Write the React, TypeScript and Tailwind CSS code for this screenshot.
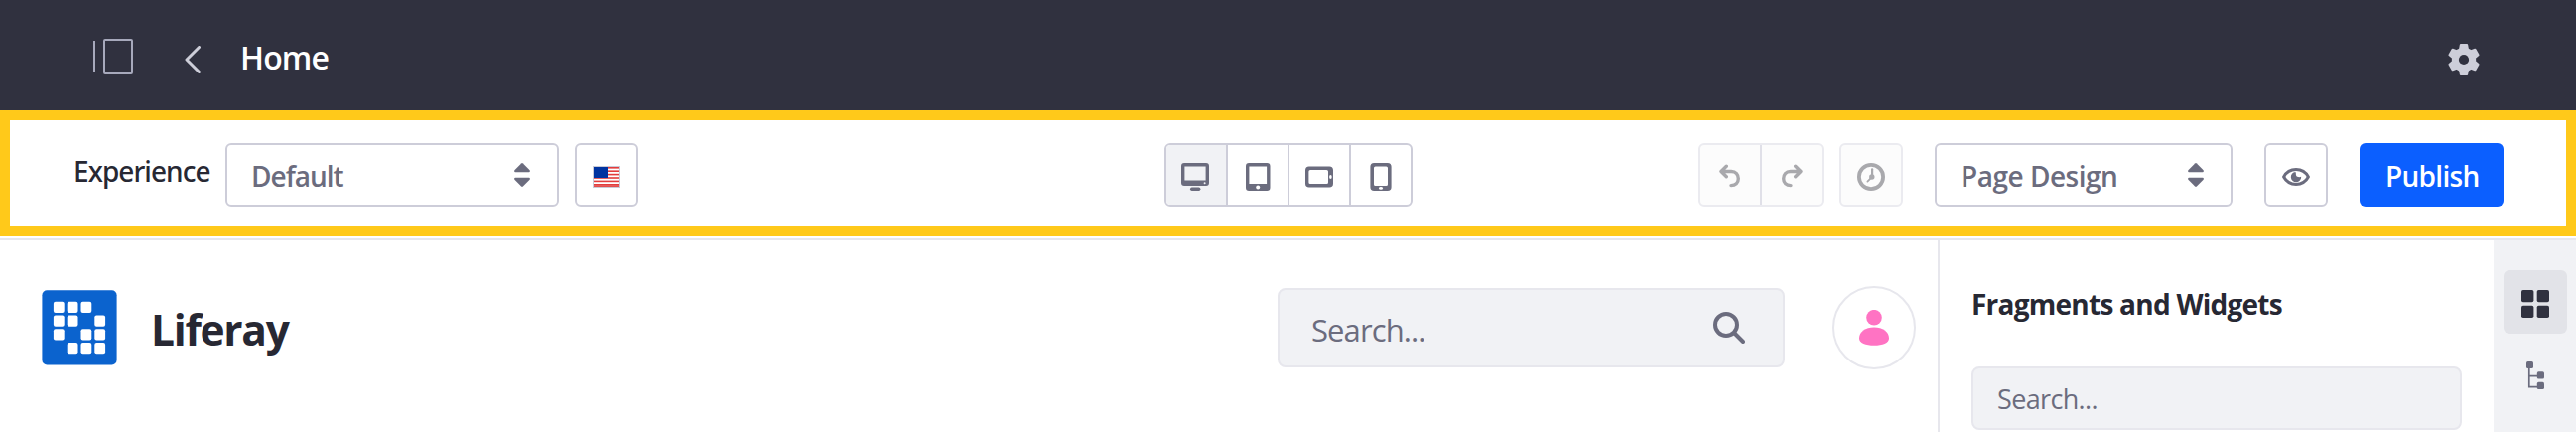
import type { ReactNode } from "react";

function PanelIcon() {
  return (
    <svg width="40" height="36" viewBox="0 0 40 36" fill="none" stroke="#a7a9bc" strokeWidth="2">
      <path d="M1 2V34" />
      <rect x="11" y="1" width="28" height="34" rx="1" />
    </svg>
  );
}

function BackIcon() {
  return (
    <svg width="16" height="28" viewBox="0 0 16 28" fill="none" stroke="#cdced9" strokeWidth="3" strokeLinecap="round" strokeLinejoin="round">
      <path d="M14.5 1.5L2 14L14.5 26.5" />
    </svg>
  );
}

function GearIcon() {
  return (
    <svg width="32" height="32" viewBox="-16 -16 32 32" fill="#cdced9">
      <circle r="12.2" />
      {[0, 60, 120, 180, 240, 300].map((a) => (
        <path key={a} transform={`rotate(${a})`} d="M-3.1 -14.9H3.1L3.9 -10H-3.9Z" stroke="#cdced9" strokeWidth="2.2" strokeLinejoin="round" />
      ))}
      <circle r="5.1" fill="#30313f" />
    </svg>
  );
}

function CaretDouble() {
  return (
    <svg width="16" height="24" viewBox="0 0 16 24" fill="#6b6c7e">
      <path d="M7.1 0.5Q8 -0.4 8.9 0.5L15.6 7.3Q16.4 9 14.8 9.2H1.2Q-0.4 9 0.4 7.3Z" />
      <path d="M7.1 23.5Q8 24.4 8.9 23.5L15.6 16.7Q16.4 15 14.8 14.8H1.2Q-0.4 15 0.4 16.7Z" />
    </svg>
  );
}

function FlagIcon() {
  return (
    <svg width="28" height="22" viewBox="0 0 28 22">
      <rect width="28" height="22" fill="#c9cad6" />
      <rect x="1" y="1" width="26" height="20" fill="#fff" />
      {[1, 4.4, 7.8, 11.2, 14.6, 18].map((y) => (
        <rect key={y} x="1" y={y} width="26" height="1.6" fill="#e23c3c" />
      ))}
      <rect x="1" y="19.4" width="26" height="1.5" fill="#e23c3c" />
      <rect x="1" y="1" width="14" height="11" fill="#0033a0" />
    </svg>
  );
}

function DesktopIcon() {
  return (
    <svg width="28" height="28" viewBox="0 0 28 28" fill="#6b6c7e">
      <path fillRule="evenodd" d="M3 0H25Q28 0 28 3V20Q28 23 25 23H3Q0 23 0 20V3Q0 0 3 0ZM3.4 3.6V17.6H24.6V3.6Z" />
      <rect x="9" y="24.6" width="10.4" height="3.4" rx="1.7" />
      <circle cx="23.6" cy="20.2" r="1" fill="#f1f2f5" />
    </svg>
  );
}

function TabletIcon() {
  return (
    <svg width="25" height="28" viewBox="0 0 25 28" fill="#6b6c7e">
      <path fillRule="evenodd" d="M3.2 0H21.3Q24.5 0 24.5 3.2V24.8Q24.5 28 21.3 28H3.2Q0 28 0 24.8V3.2Q0 0 3.2 0ZM3.4 3.5V21H21.1V3.5Z" />
      <circle cx="12.2" cy="24.5" r="2" fill="#fff" />
    </svg>
  );
}

function PhoneIcon({ landscape = false }: { landscape?: boolean }) {
  return (
    <svg width="28" height="28" viewBox="0 0 28 28" fill="#6b6c7e" className={landscape ? "-rotate-90" : ""}>
      <path fillRule="evenodd" d="M7.2 0H20.8Q24.6 0 24.6 3.8V24.2Q24.6 28 20.8 28H7.2Q3.4 28 3.4 24.2V3.8Q3.4 0 7.2 0ZM8.6 3.4Q7 3.4 7 5V21.4Q7 23 8.6 23H19.4Q21 23 21 21.4V5Q21 3.4 19.4 3.4Z" />
      <ellipse cx="14" cy="25.4" rx="2" ry="1.3" fill="#fff" />
    </svg>
  );
}

function UndoIcon({ flip = false }: { flip?: boolean }) {
  return (
    <svg width="22" height="24" viewBox="0 0 22 24" fill="none" stroke="#a9a9ad" strokeWidth="3.4" strokeLinecap="round" strokeLinejoin="round" className={flip ? "-scale-x-100" : ""}>
      <path d="M7.3 2.2L2 7.5L7.3 12.8M2.4 7.5H12.2C16.8 7.5 19.3 10.8 19.3 14.8C19.3 18.8 16.4 21.6 12 21.6" />
    </svg>
  );
}

function TimeIcon() {
  return (
    <svg width="28" height="28" viewBox="0 0 28 28" fill="none" stroke="#a9a9ad">
      <circle cx="14" cy="14" r="12.1" strokeWidth="3.8" />
      <path d="M15.1 14V6.3" strokeWidth="2.2" strokeLinecap="round" />
      <path d="M14.6 14.4L10.4 18.6" strokeWidth="1.8" strokeLinecap="round" />
      <circle cx="14.8" cy="14" r="2.7" fill="#a9a9ad" stroke="none" />
    </svg>
  );
}

function EyeIcon() {
  return (
    <svg width="28" height="18" viewBox="0 0 28 18">
      <path d="M1.6 9C4 4.6 8.6 1.6 14 1.6S24 4.6 26.4 9C24 13.4 19.4 16.4 14 16.4S4 13.4 1.6 9Z" fill="none" stroke="#6b6c7e" strokeWidth="3" strokeLinejoin="round" />
      <path d="M13.4 3.9A5.2 5.2 0 1 0 19.2 8.8C17.6 9.6 14.4 9.2 14 7.2C13.8 6 14 4.8 13.4 3.9Z" fill="#6b6c7e" />
    </svg>
  );
}

const logoCells = [
  [0, 0], [1, 0], [2, 0],
  [0, 1], [1, 1], [3, 1],
  [0, 2], [2, 2], [3, 2],
  [1, 3], [2, 3], [3, 3],
];

function Logo() {
  return (
    <svg width="76" height="76" viewBox="0 0 76 76">
      <rect x="0.4" y="0.3" width="75.2" height="75.2" rx="5" fill="#0b63ce" />
      {logoCells.map(([c, r]) => (
        <rect key={`${c}-${r}`} x={11.9 + c * 13.8} y={11.7 + r * 13.8} width="10.8" height="11.2" rx="2" fill="#fff" />
      ))}
    </svg>
  );
}

function SearchIcon() {
  return (
    <svg width="32" height="32" viewBox="0 0 32 32" fill="none" stroke="#6b6c7e" strokeLinecap="round">
      <circle cx="13" cy="13" r="11" strokeWidth="4" />
      <path d="M21.5 21.5L30 30" strokeWidth="4" />
    </svg>
  );
}

function PersonIcon() {
  return (
    <svg width="30" height="36" viewBox="0 0 30 36" fill="#ff73c3">
      <circle cx="15" cy="7.7" r="7.8" />
      <path d="M0 28.5C0 22 6.4 17.4 15 17.4S30 22 30 28.5C30 33.4 23.5 35.8 15 35.8S0 33.4 0 28.5Z" />
    </svg>
  );
}

function CardsIcon() {
  return (
    <svg width="28" height="28" viewBox="0 0 28 28" fill="#30313f">
      <rect width="12.4" height="12.2" rx="1.8" />
      <rect x="15.7" width="12.3" height="12.2" rx="1.8" />
      <rect y="15.8" width="12.4" height="12.2" rx="1.8" />
      <rect x="15.7" y="15.8" width="12.3" height="12.2" rx="1.8" />
    </svg>
  );
}

function TreeIcon() {
  return (
    <svg width="18" height="28" viewBox="0 0 18 28" fill="#6b6c7e">
      <rect width="7" height="7" rx="1.6" />
      <rect x="10.8" y="10.3" width="7.2" height="7.2" rx="1.6" />
      <rect x="10.8" y="20.8" width="7.2" height="7.2" rx="1.6" />
      <path d="M2.8 5V25.6H12M2.8 14.7H12" fill="none" stroke="#6b6c7e" strokeWidth="1.7" />
    </svg>
  );
}

function IconButton({ children, disabled = false }: { children: ReactNode; disabled?: boolean }) {
  return (
    <button
      className={`flex size-16 items-center justify-center rounded-md border-2 pt-1 ${
        disabled ? "border-[#ebebf0] bg-[#fcfcfc]" : "border-[#cdcdd9] bg-white"
      }`}
    >
      {children}
    </button>
  );
}

function Select({ label, className }: { label: string; className: string }) {
  return (
    <button className={`flex h-16 items-center justify-between rounded-md border-2 border-[#cdcdd9] pl-6 text-[28px] leading-10 font-semibold text-[#6b6c7e] ${className}`}>
      <span className="mt-0.5">{label}</span>
      <CaretDouble />
    </button>
  );
}

export default function App() {
  return (
    <div className="flex h-[435px] w-[2595px] flex-col overflow-hidden bg-white font-['Open_Sans','Noto_Sans',sans-serif] whitespace-nowrap">
      <header className="flex h-[111px] shrink-0 items-center bg-[#30313f] pt-[3px] pr-[97px] pl-[94px]">
        <PanelIcon />
        <span className="mt-[6px] ml-[52px]">
          <BackIcon />
        </span>
        <h1 className="mt-0.5 ml-10 text-[32px] leading-10 font-semibold tracking-[-0.9px] text-white">Home</h1>
        <span className="mt-[6px] ml-auto">
          <GearIcon />
        </span>
      </header>

      <div className="flex h-[127px] shrink-0 items-center border-[10px] border-[#ffc91a] pt-[3px] pr-[63px] pl-16">
        <div className="flex w-[1099px] items-center">
          <label className="-mt-2 w-[153px] font-['Noto_Sans',sans-serif] text-[28px] leading-10 font-medium tracking-[-0.95px] text-[#272833]">Experience</label>
          <Select label="Default" className="w-[336px] pr-[27px] tracking-[-1px]" />
          <div className="ml-4">
            <IconButton>
              <FlagIcon />
            </IconButton>
          </div>
        </div>

        <div className="flex h-16 w-[250px] divide-x-2 divide-[#cdcdd9] overflow-hidden rounded-md border-2 border-[#cdcdd9]">
          <button className="flex w-[62px] items-center justify-center bg-[#f1f2f5] pt-1 pr-0.5">
            <DesktopIcon />
          </button>
          <button className="flex w-[62px] items-center justify-center pt-1">
            <TabletIcon />
          </button>
          <button className="flex w-[62px] items-center justify-center pt-1">
            <PhoneIcon landscape />
          </button>
          <button className="flex w-[60px] items-center justify-center pt-1">
            <PhoneIcon />
          </button>
        </div>

        <div className="ml-auto flex items-center">
          <div className="flex h-16 w-[126px] rounded-md border-2 border-[#ebebf0] bg-[#fcfcfc]">
            <button className="flex w-[62px] items-center justify-center border-r-2 border-[#e0e0e8] pt-0.5 pr-px">
              <UndoIcon />
            </button>
            <button className="flex w-[60px] items-center justify-center pt-0.5">
              <UndoIcon flip />
            </button>
          </div>
          <div className="ml-4">
            <IconButton disabled>
              <TimeIcon />
            </IconButton>
          </div>
          <Select label="Page Design" className="ml-8 w-[300px] pr-[27px] tracking-[-0.5px]" />
          <div className="ml-8">
            <IconButton>
              <EyeIcon />
            </IconButton>
          </div>
          <button className="ml-8 h-16 w-[145px] rounded-md bg-[#0b5fff] pt-0.5 pl-[26px] text-left text-[28px] leading-10 font-semibold tracking-[-0.7px] text-white">
            Publish
          </button>
        </div>
      </div>

      <div className="mt-0.5 flex min-h-0 flex-1 border-t-2 border-[#e7e7ed]">
        <main className="flex w-[1952px] items-start pt-[46px] pl-[42px]">
          <div className="mt-[4px]">
            <Logo />
          </div>
          <div className="mt-[14px] ml-[34px] text-[42.5px] leading-[60px] font-bold tracking-[-1.3px] text-[#272833]">Liferay</div>
          <div className="mt-0.5 mr-12 ml-auto flex h-20 w-[511px] items-center justify-between rounded-lg border-2 border-[#e7e7ed] bg-[#f1f2f5] pr-[38px] pl-8">
            <span className="mt-1 text-[31px] leading-10 tracking-[-0.9px] text-[#6b6c7e]">Search...</span>
            <SearchIcon />
          </div>
          <div className="mr-[22px] flex size-[84px] items-center justify-center rounded-full border-2 border-[#e7e7ed]">
            <PersonIcon />
          </div>
        </main>

        <aside className="w-[560px] border-l-2 border-[#e7e7ed] pt-11 pl-8">
          <h2 className="text-[28px] leading-10 font-bold tracking-[-0.75px] text-[#272833]">Fragments and Widgets</h2>
          <div className="mt-[43px] flex h-16 w-[494px] items-center rounded-lg border-2 border-[#e7e7ed] bg-[#f1f2f5] pl-6">
            <span className="mt-0.5 text-[27px] leading-10 tracking-[-0.65px] text-[#6b6c7e]">Search...</span>
          </div>
        </aside>

        <nav className="flex flex-1 flex-col items-start bg-[#f1f2f5] pt-[30px] pl-2.5">
          <button className="flex size-16 items-center justify-center rounded-md bg-[#e2e3e8] pt-1">
            <CardsIcon />
          </button>
          <button className="mt-2 flex size-16 items-center justify-center pt-1">
            <TreeIcon />
          </button>
        </nav>
      </div>
    </div>
  );
}
